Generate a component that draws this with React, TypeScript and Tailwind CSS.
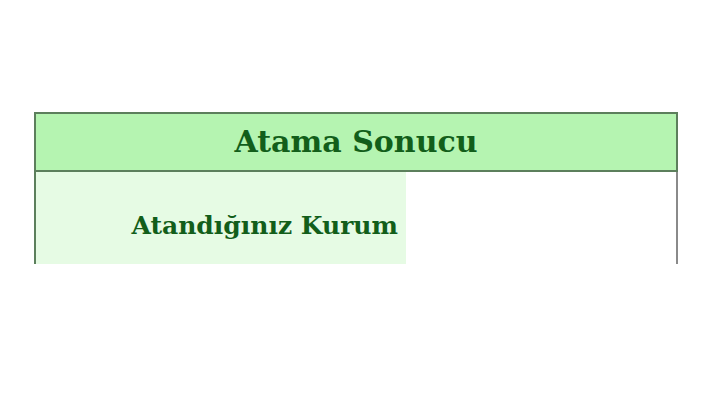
export default function App() {
  return (
    <div className="w-[720px] h-[405px] bg-white pt-[112px] pl-[34px] pr-[42px]" style={{ fontFamily: '"DejaVu Serif", "Liberation Serif", serif' }}>
      {/* header row */}
      <div className="h-[60px] bg-[#b5f4b1] border-2 border-[#5c7f5c] flex items-center justify-center">
        <span className="text-[30px] font-bold text-[#125e1a] leading-none">Atama Sonucu</span>
      </div>
      {/* result row */}
      <div className="h-[92px] flex border-l-2 border-r-2 border-l-[#5c7f5c] border-r-[#8a8a8a]">
        <div className="w-[370px] bg-[#e6fbe4] flex items-center justify-end pr-[8px] pt-[14px]">
          <span className="text-[25px] font-bold text-[#125e1a] leading-none">Atandığınız Kurum</span>
        </div>
        <div className="flex-1 bg-white" />
      </div>
    </div>
  )
}
